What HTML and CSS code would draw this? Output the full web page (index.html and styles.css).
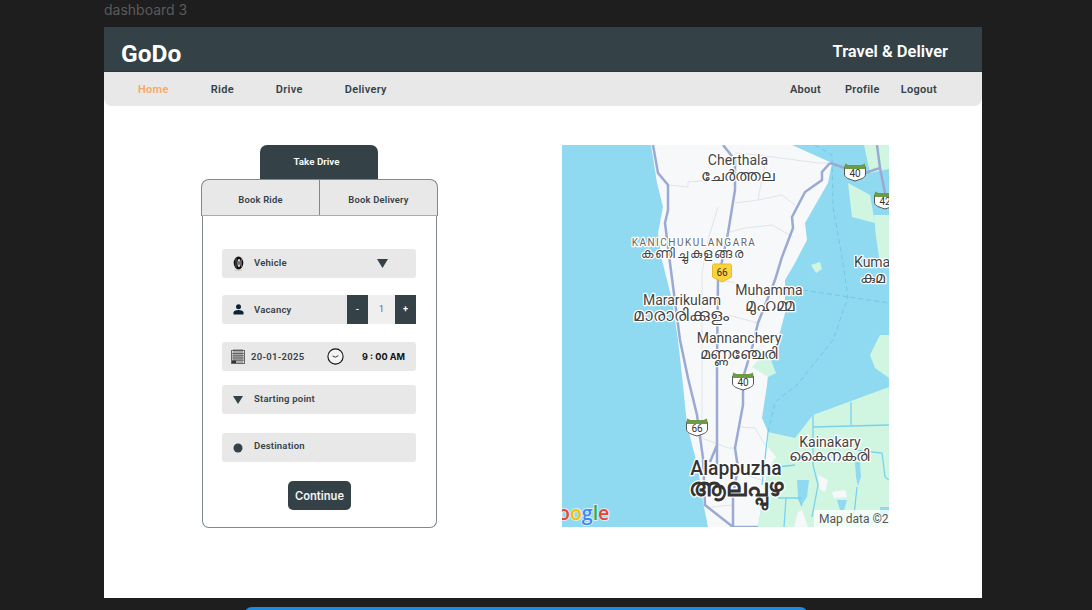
FILE: index.html
```html
<!DOCTYPE html>
<html lang="en">
<head>
    <meta charset="UTF-8">
    <title>GoDo - dashboard 3</title>
    <link rel="stylesheet" href="styles.css">
</head>
<body>
    <div class="frame-title">dashboard 3</div>
    <div class="frame">
        <header class="header">
            <div class="logo">GoDo</div>
            <div class="tagline">Travel &amp; Deliver</div>
        </header>
        <nav class="nav">
            <div class="nav-left">
                <a class="nav-link nav-active">Home</a>
                <a class="nav-link">Ride</a>
                <a class="nav-link">Drive</a>
                <a class="nav-link">Delivery</a>
            </div>
            <div class="nav-right">
                <a class="nav-link">About</a>
                <a class="nav-link nav-profile">Profile</a>
                <a class="nav-link">Logout</a>
            </div>
        </nav>
        <main class="content">
            <section class="booking">
                <div class="tab-top">Take Drive</div>
                <div class="tabs">
                    <div class="tab">Book Ride</div>
                    <div class="tab">Book Delivery</div>
                </div>
                <div class="card">
                    <div class="field field-vehicle">
                        <span class="field-icon">
                            <svg width="11" height="15" viewBox="0 0 11 15">
                                <ellipse cx="5.500" cy="7" rx="4.800" ry="6.500" fill="#111"/>
                                <path d="M3 2V12M8.500 2.500V11.500" stroke="#777" stroke-width=".7"/>
                                <ellipse cx="6" cy="7" rx="1.500" ry="4" fill="#ddd"/>
                                <ellipse cx="6" cy="7" rx=".7" ry="2.200" fill="#333"/>
                                <path d="M2 14.300H9" stroke="#bbb" stroke-width=".8"/>
                            </svg>
                        </span>
                        <span class="field-label">Vehicle</span>
                        <svg class="caret" width="11" height="9" viewBox="0 0 11 9"><path d="M0 0H11L5.500 9Z" fill="#344248"/></svg>
                    </div>
                    <div class="field field-vacancy">
                        <span class="field-icon">
                            <svg width="11" height="11" viewBox="0 0 11 11">
                                <circle cx="5.500" cy="2.800" r="2.500" fill="#0d2233"/>
                                <path d="M.5 10.500V8.500C.5 6.900 2.500 6 5.500 6S10.500 6.900 10.500 8.500V10.500Z" fill="#0d2233"/>
                            </svg>
                        </span>
                        <span class="field-label">Vacancy</span>
                        <div class="stepper">
                            <span class="step-btn">-</span>
                            <span class="step-value">1</span>
                            <span class="step-btn">+</span>
                        </div>
                    </div>
                    <div class="field field-date">
                        <svg class="icon-date" width="14" height="15" viewBox="0 0 14 15">
                            <rect x=".5" y="1.500" width="13" height="13" fill="#e2e2e2" stroke="#666"/>
                            <path d="M1 4.500H13M1 6.800H13M1 9H13M1 11.200H13M3 0V14M5 0V14M7 0V14M9 0V14M11 0V14" stroke="#444" stroke-width=".7"/>
                            <path d="M1 11.500H5V14H1Z" fill="#333"/>
                        </svg>
                        <span class="date-text">20-01-2025</span>
                        <svg class="icon-clock" width="17" height="17" viewBox="0 0 17 17">
                            <circle cx="8.500" cy="8.500" r="7.600" fill="#f4f4f4" stroke="#111" stroke-width="1.100"/>
                            <path d="M8.500 9.200L5.600 8M8.500 9.200L11.400 7.600" stroke="#222" stroke-width=".9" fill="none"/>
                        </svg>
                        <span class="time-text">9 : 00 AM</span>
                    </div>
                    <div class="field field-start">
                        <span class="field-icon">
                            <svg width="10" height="8" viewBox="0 0 10 8"><path d="M0 0H10L5 8Z" fill="#344248"/></svg>
                        </span>
                        <span class="field-label">Starting point</span>
                    </div>
                    <div class="field field-dest">
                        <span class="field-icon">
                            <svg width="10" height="10" viewBox="0 0 10 10"><circle cx="5" cy="5" r="4.500" fill="#344248"/></svg>
                        </span>
                        <span class="field-label">Destination</span>
                    </div>
                    <button class="continue">Continue</button>
                </div>
            </section>

            <svg class="map" width="327" height="382" viewBox="0 0 327 382">
                <rect width="327" height="382" fill="#8fdaf0"/>
                <!-- land strip -->
                <path class="land" d="M89 0L95 38L101 62L96 88L100 115L110 155L116 195L121 240L125 280L136 323L141 357L146 382H196L206 323L206 287L200 273L205 240L207 220L216 195L223 168L223 135L233 118L245 95L243 78L266 38L270 18L230 0Z"/>
                <!-- green parts -->
                <path class="green" d="M206 287L233 293L251 270L327 242V382H196L206 323Z"/>
                <path class="green" d="M190 222L205 205L214 228L206 232Z"/>
                <path class="green" d="M286 38L308 50L313 78L290 72Z"/>
                <path class="green" d="M302 0H327V24L308 28Z"/>
                <path class="green" d="M312 70H327V120L318 118L314 92Z"/>
                <path class="green" d="M308 210L318 190H327V233L313 223Z"/>
                <path class="green" d="M249 120L258 117L260 124L254 128Z"/>
                <path class="water" d="M235 335H247L245 352L239 361L236 352Z"/>
                <path class="water" d="M275 355H285L282 365H278Z"/>
                <path class="water" d="M293 317H298L299 332L296 341L294 332Z"/>
                <path class="water" d="M318 362H327V370H318Z"/>
                <path class="white" d="M256 330L266 335L263 347L258 344Z"/>
                <path class="white" d="M236 367L240 365L246 382H232Z"/>
                <path class="white" d="M270 347L283 345L285 352L272 353Z"/>
                <path class="white" d="M206 302L214 312L206 323Z"/>
                <!-- small roads -->
                <path class="road-thin" d="M106 40L126 42L126 37L173 33M173 58L196 55L220 50L233 60M168 87L183 83L210 80L231 92M196 55L201 28L206 12M173 8L196 10L256 18L268 18M156 62L146 95L140 128L140 293L166 303L173 303M156 135L170 137L196 152M166 170L196 178M178 282L193 283L203 300M150 362L170 360M183 330L206 337"/>
                <!-- lake boundaries -->
                <path class="road-canal" d="M253 0L270 10L271 62L280 112L286 152L271 195L235 240L213 257L206 287M241 145L327 158"/>
                <!-- canals in the paddy fields -->
                <path class="road-water" d="M251 270V320L256 340L250 372M251 282L327 280M289 257V280M206 323L233 320M216 353H240M236 352L240 361M224 353L222 382M293 305L320 308L323 332L327 335M295 342L292 370M206 287L200 340"/>
                <!-- highways -->
                <path class="road" d="M91 0L96 28L106 40L106 65L103 78L108 118L118 195L126 233L135 270L141 313L143 360L171 382H196"/>
                <path class="road" d="M161 0L173 15L173 45L166 88L156 135L155 217L155 300L148 317M155 300L155 325"/>
                <path class="road" d="M268 18L260 27L260 35L243 47L230 72L231 83L220 112L213 135L196 178L190 203L181 233L181 260L173 303L176 323L171 350V382"/>
                <path class="road" d="M268 18L283 23M303 28L318 23L315 0M318 23L323 48"/>

                <g class="shield" transform="translate(293 27)">
                    <path class="shield-body" d="M-10.500 -5H10.500V2C10.500 6 6 7 0 9C-6 7 -10.500 6 -10.500 2Z"/>
                    <path class="shield-top" d="M-10.500 -3L-10 -8.500L-6.500 -7H6.500L10 -8.500L10.500 -3Z"/>
                    <text x="0" y="5">40</text>
                </g>
                <g class="shield" transform="translate(323 55)">
                    <path class="shield-body" d="M-10.500 -5H10.500V2C10.500 6 6 7 0 9C-6 7 -10.500 6 -10.500 2Z"/>
                    <path class="shield-top" d="M-10.500 -3L-10 -8.500L-6.500 -7H6.500L10 -8.500L10.500 -3Z"/>
                    <text x="0" y="5">42</text>
                </g>
                <g class="shield" transform="translate(181 236)">
                    <path class="shield-body" d="M-10.500 -5H10.500V2C10.500 6 6 7 0 9C-6 7 -10.500 6 -10.500 2Z"/>
                    <path class="shield-top" d="M-10.500 -3L-10 -8.500L-6.500 -7H6.500L10 -8.500L10.500 -3Z"/>
                    <text x="0" y="5">40</text>
                </g>
                <g class="shield" transform="translate(135 282)">
                    <path class="shield-body" d="M-10.500 -5H10.500V2C10.500 6 6 7 0 9C-6 7 -10.500 6 -10.500 2Z"/>
                    <path class="shield-top" d="M-10.500 -3L-10 -8.500L-6.500 -7H6.500L10 -8.500L10.500 -3Z"/>
                    <text x="0" y="5">66</text>
                </g>
                <path d="M152 119H168C169 119 169.500 120 169.500 121V132L160 137L150.500 132V121C150.500 120 151 119 152 119Z" fill="#fdd23a" stroke="#e8b92c"/>
                <text class="shield-66" x="160" y="131">66</text>

                <!-- place labels -->
                <text class="place" x="176" y="20">Cherthala</text>
                <text class="place place-ml" x="176" y="36">ചേർത്തല</text>
                <text class="place-caps" x="132" y="101">KANICHUKULANGARA</text>
                <text class="place-small" x="131" y="113">കണിച്ചുകുളങ്ങര</text>
                <text class="place" x="120" y="160">Mararikulam</text>
                <text class="place place-ml-big" x="119" y="176">മാരാരിക്കുളം</text>
                <text class="place" x="207" y="150">Muhamma</text>
                <text class="place place-ml-big" x="208" y="166">മുഹമ്മ</text>
                <text class="place" x="177" y="198">Mannanchery</text>
                <text class="place place-ml" x="176" y="214">മണ്ണഞ്ചേരി</text>
                <text class="place place-edge" x="292" y="122">Kuma</text>
                <text class="place place-ml place-edge" x="298" y="138">കുമ</text>
                <text class="place" x="268" y="302">Kainakary</text>
                <text class="place place-ml" x="267" y="316">കൈനകരി</text>
                <text class="city" x="174" y="330">Alappuzha</text>
                <text class="city city-ml" x="174" y="351">ആലപ്പുഴ</text>

                <text class="google" x="-4" y="375"><tspan fill="#ea4335">o</tspan><tspan fill="#fbbc05">o</tspan><tspan fill="#4285f4">g</tspan><tspan fill="#34a853">l</tspan><tspan fill="#ea4335">e</tspan></text>
                <rect x="252" y="365" width="75" height="17" fill="#fff" opacity=".75"/>
                <text class="map-data" x="257" y="378">Map data ©2</text>
            </svg>
        </main>
    </div>
    <div class="cta"></div>
</body>
</html>
```

FILE: styles.css
```css
:root {
    --dark: #344248;
    --grey: #e8e8e8;
    --line: #7f8a8e;
    --orange: #f9a95f;
}
* {
    margin: 0;
    padding: 0;
    box-sizing: border-box;
}
html, body {
    height: 610px;
    overflow: hidden;
}
body {
    background-color: #1e1e1e;
    font-family: Roboto, Arial, sans-serif;
    color: var(--dark);
}
.frame-title {
    height: 27px;
    padding: 1px 0 0 104px;
    font-family: Inter, Arial, sans-serif;
    font-size: 14px;
    line-height: 17px;
    color: #5a5a5a;
}
.frame {
    width: 878px;
    height: 571px;
    margin-left: 104px;
    background-color: #fff;
}
.header {
    height: 45px;
    background-color: var(--dark);
    border-bottom: 1px solid #2c383d;
    display: flex;
    justify-content: space-between;
    padding: 0 34px 0 17px;
    color: #fff;
}
.logo {
    font-size: 24.500px;
    font-weight: 700;
    line-height: 54px;
}
.tagline {
    font-size: 16.500px;
    font-weight: 600;
    line-height: 50px;
}
.nav {
    height: 34px;
    background-color: var(--grey);
    border-radius: 0 0 8px 8px;
    display: flex;
    justify-content: space-between;
    align-items: center;
    padding: 0 45px 0 34px;
}
.nav-left, .nav-right {
    display: flex;
}
.nav-left {
    gap: 42px;
}
.nav-right {
    gap: 23px;
}
.nav-link {
    font-size: 11px;
    font-weight: 600;
    letter-spacing: .3px;
}
.nav-profile {
    margin: 0 -2px 0 1px;
}
.nav-active {
    color: var(--orange);
}
.content {
    display: flex;
    padding: 39px 0 0 97px;
    gap: 124px;
}
.booking {
    width: 237px;
    display: flex;
    flex-direction: column;
}
.tab-top {
    width: 118px;
    height: 34px;
    margin-left: 59px;
    padding-right: 5px;
    background-color: var(--dark);
    border-radius: 7px 7px 0 0;
    color: #fff;
    font-size: 9.800px;
    font-weight: 600;
    line-height: 34px;
    text-align: center;
}
.tabs {
    height: 37px;
    display: flex;
    background-color: var(--grey);
    border: 1px solid var(--line);
    border-bottom: 1px solid #a5adb0;
    border-radius: 8px 8px 0 0;
}
.tab {
    flex: 1;
    font-size: 9.400px;
    font-weight: 600;
    line-height: 39px;
    text-align: center;
    letter-spacing: .2px;
}
.tab + .tab {
    border-left: 1px solid var(--line);
}
.card {
    width: 235px;
    height: 312px;
    margin-left: 1px;
    border: 1px solid var(--line);
    border-top: none;
    border-radius: 0 0 7px 7px;
    padding: 33px 20px 0 19px;
    display: flex;
    flex-direction: column;
}
.field {
    height: 29px;
    background-color: var(--grey);
    border-radius: 3px;
    display: flex;
    align-items: center;
    font-size: 9.500px;
    font-weight: 600;
}
.field-vacancy {
    margin-top: 17px;
}
.field-date {
    margin-top: 18px;
}
.field-start {
    margin-top: 14px;
}
.field-dest {
    margin-top: 19px;
}
.field-icon {
    width: 32px;
    flex: none;
    display: flex;
    justify-content: center;
}
.field-label {
    letter-spacing: .2px;
    padding-bottom: 2px;
}
.field-vacancy .field-label {
    padding-bottom: 0;
}
.field-dest .field-label {
    padding-bottom: 4px;
}
.caret {
    margin-left: auto;
    margin-right: 28px;
}
.stepper {
    margin-left: auto;
    display: flex;
    height: 29px;
}
.step-btn {
    width: 21px;
    background-color: var(--dark);
    color: #fff;
    font-size: 9px;
    line-height: 29px;
    text-align: center;
}
.step-value {
    width: 27px;
    background-color: #efefef;
    font-size: 9px;
    font-weight: 400;
    line-height: 29px;
    text-align: center;
    color: #666;
}
.icon-date {
    margin-left: 9px;
    flex: none;
}
.date-text {
    margin-left: 6px;
    letter-spacing: .3px;
}
.icon-clock {
    margin-left: auto;
    flex: none;
}
.time-text {
    margin: 0 11px 0 18px;
    font-family: Inter, Arial, sans-serif;
    font-weight: 700;
    font-size: 9.100px;
    color: #111;
}
.continue {
    width: 63px;
    height: 29px;
    margin: 19px 0 0 66px;
    border: none;
    border-radius: 5px;
    background-color: var(--dark);
    color: #f4f4f4;
    font-family: Inter, Arial, sans-serif;
    font-size: 11.200px;
    font-weight: 600;
}
.map {
    display: block;
    flex: none;
    font-family: Roboto, "Noto Sans", sans-serif;
}
.land {
    fill: #f7f8f9;
}
.green {
    fill: #d0f6e1;
}
.water {
    fill: #8fdaf0;
}
.white {
    fill: #f7f8f9;
}
.road {
    fill: none;
    stroke: #9aaad2;
    stroke-width: 2.500px;
}
.road-thin {
    fill: none;
    stroke: #dfe4ec;
    stroke-width: 1px;
}
.road-canal {
    fill: none;
    stroke: #6fc9e8;
    stroke-width: 1px;
    stroke-dasharray: 5 3;
}
.road-water {
    fill: none;
    stroke: #78d2ef;
    stroke-width: 1.300px;
}
.shield-body {
    fill: #fff;
    stroke: #555;
    stroke-width: 1px;
}
.shield-top {
    fill: #6f9a45;
}
.shield text, .shield-66 {
    font-size: 10px;
    text-anchor: middle;
    fill: #333;
}
.place, .place-caps, .place-small, .city {
    text-anchor: middle;
    paint-order: stroke;
    stroke: #fff;
    stroke-width: 2.500px;
    stroke-linejoin: round;
    fill: #444;
}
.place {
    font-size: 14px;
}
.place-ml {
    font-size: 15.600px;
}
.place-ml-big {
    font-size: 17px;
}
.place-edge {
    text-anchor: start;
}
.place-caps {
    font-size: 10px;
    letter-spacing: 1.500px;
    fill: #666;
}
.place-small {
    font-size: 12.500px;
    letter-spacing: 1.800px;
}
.city {
    font-size: 19.300px;
    font-weight: 500;
    fill: #333;
}
.city-ml {
    font-size: 24px;
    font-weight: 700;
}
.google {
    font-family: "Open Sans", sans-serif;
    font-size: 19.500px;
    font-weight: 600;
    paint-order: stroke;
    stroke: #d5eef6;
    stroke-width: 2px;
}
.map-data {
    font-size: 12px;
    fill: #555;
}
.cta {
    width: 564px;
    height: 10px;
    margin: 9px 0 0 244px;
    background-color: #1b8ce3;
    border-radius: 8px 8px 0 0;
}
```
